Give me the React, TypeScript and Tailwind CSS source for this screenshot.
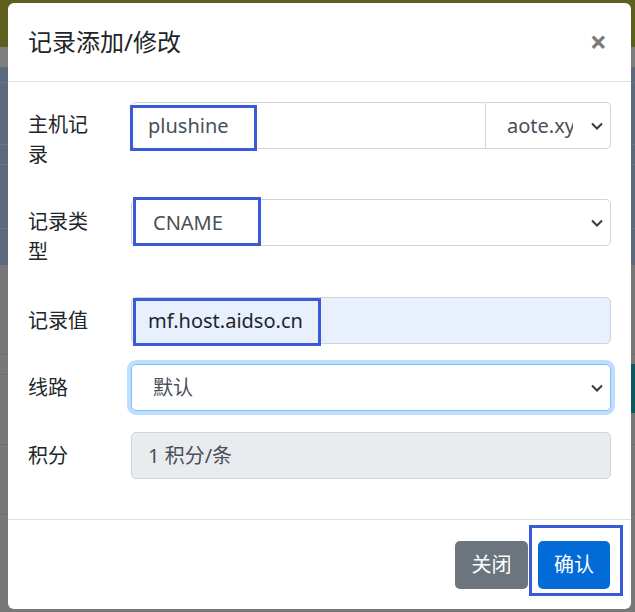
import React from "react";

const Chevron = () => (
  <svg width="12" height="8" viewBox="0 0 12 8" className="shrink-0">
    <path d="M1 1.5l5 5 5-5" fill="none" stroke="#343a40" strokeWidth="2" />
  </svg>
);

const Label = ({ children, className = "" }: { children: React.ReactNode; className?: string }) => (
  <div className={`w-[72px] shrink-0 text-[20px] leading-[30px] text-[#212529] ${className}`}>{children}</div>
);

const Mark = ({ className }: { className: string }) => (
  <div className={`absolute border-[3px] border-[#3b5bd6] ${className}`}></div>
);

const App = () => {
  return (
    <div className="relative w-[635px] h-[612px] overflow-hidden font-['Noto_Sans','Noto_Sans_CJK_SC',sans-serif]">
      {/* page behind the backdrop */}
      <div className="flex flex-col h-full">
        <div className="h-[47px] bg-[#5e5f1c]"></div>
        <div className="h-[20px] bg-[#7e7e7e]"></div>
        <div className="h-[198px] bg-[#5b6a7e] flex flex-col">
          <div className="h-[16px] border-b border-[#6a7788]"></div>
          <div className="h-[62px] border-b border-[#6a7788]"></div>
          <div className="h-[20px] border-b border-[#6a7788]"></div>
          <div className="h-[64px] border-b border-[#6a7788]"></div>
        </div>
        <div className="flex-1 bg-[#787878] flex flex-col">
          <div className="h-[90px] border-b border-[#6e6e6e]"></div>
          <div className="h-[20px] border-b border-[#6e6e6e]"></div>
          <div className="h-[70px] border-b border-[#6e6e6e]"></div>
          <div className="h-[70px] border-b border-[#6e6e6e]"></div>
        </div>
      </div>
      <div className="absolute right-0 top-[364px] w-[4px] h-[49px] bg-[#0b5a63]"></div>

      {/* modal */}
      <div className="absolute left-[8px] top-[3px] w-[623px] h-[606px] bg-white rounded-[6px] flex flex-col">
        <div className="h-[79px] border-b border-[#dee2e6] px-[20px] pr-[24px] flex items-center justify-between">
          <h4 className="text-[24px] leading-[36px] text-[#212529]">记录添加/修改</h4>
          <span className="text-[30px] leading-none font-bold text-[#7b7b7b]">×</span>
        </div>

        <div className="px-[20px] pt-[20px]">
          <div className="flex items-start mb-[20px]">
            <Label className="pt-[8px] pb-[9px]">主机记录</Label>
            <div className="ml-[31px] flex-1 flex h-[47px]">
              <div className="flex-1 border border-[#ced4da] rounded-l-[5px] pl-[16px] flex items-center text-[20px] text-[#495057]">
                plushine
              </div>
              <div className="w-[125px] border border-l-0 border-[#ced4da] rounded-r-[5px] pl-[21px] pr-[7px] flex items-center text-[20px] text-[#495057]">
                <span className="w-[66px] overflow-hidden whitespace-nowrap">aote.xyz</span>
                <span className="ml-auto"><Chevron /></span>
              </div>
            </div>
          </div>

          <div className="flex items-start mb-[20px]">
            <Label className="pt-[8px] pb-[10px]">记录类型</Label>
            <div className="ml-[31px] flex-1 h-[47px] border border-[#ced4da] rounded-[5px] pl-[21px] pr-[7px] flex items-center justify-between text-[20px] text-[#495057]">
              <span>CNAME</span>
              <Chevron />
            </div>
          </div>

          <div className="flex items-center mb-[20px]">
            <Label>记录值</Label>
            <div className="ml-[31px] flex-1 h-[47px] border border-[#ced4da] rounded-[5px] bg-[#e8f0fe] pl-[16px] flex items-center text-[20px] text-[#212529]">
              mf.host.aidso.cn
            </div>
          </div>

          <div className="flex items-center mb-[21px]">
            <Label>线路</Label>
            <div className="ml-[31px] flex-1 h-[47px] border border-[#80bdff] rounded-[5px] shadow-[0_0_0_4px_rgba(0,123,255,0.25)] pl-[21px] pr-[7px] flex items-center justify-between text-[20px] text-[#495057]">
              <span>默认</span>
              <Chevron />
            </div>
          </div>

          <div className="flex items-center mb-[20px]">
            <Label>积分</Label>
            <div className="ml-[31px] flex-1 h-[47px] border border-[#ced4da] rounded-[5px] bg-[#e9ecef] pl-[16px] flex items-center text-[20px] text-[#495057]">
              1 积分/条
            </div>
          </div>
        </div>

        <div className="mt-[20px] flex-1 border-t border-[#dee2e6] px-[21px] flex items-center justify-end gap-[10px]">
          <button className="h-[48px] w-[73px] rounded-[5px] bg-[#6c757d] text-white text-[20px]">关闭</button>
          <button className="h-[48px] w-[72px] rounded-[5px] bg-[#036bd8] text-white text-[20px]">确认</button>
        </div>
      </div>

      {/* annotation boxes */}
      <Mark className="left-[130px] top-[105px] w-[127px] h-[46px]" />
      <Mark className="left-[133px] top-[197px] w-[128px] h-[49px]" />
      <Mark className="left-[133px] top-[298px] w-[188px] h-[48px]" />
      <Mark className="left-[529px] top-[525px] w-[94px] h-[71px]" />
    </div>
  );
};

export default App;
